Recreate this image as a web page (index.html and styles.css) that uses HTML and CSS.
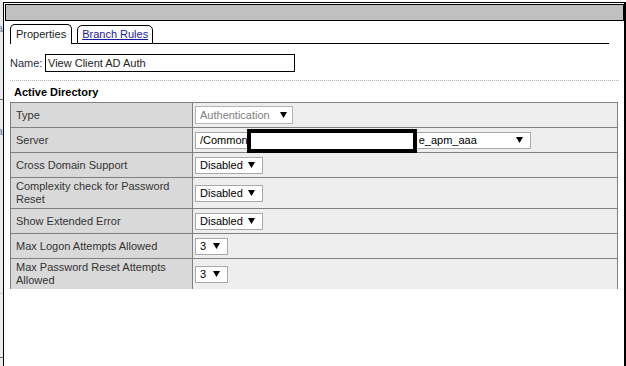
FILE: index.html
```html
<!DOCTYPE html>
<html>
<head>
<meta charset="utf-8">
<title>View Client AD Auth</title>
<link rel="stylesheet" href="styles.css">
</head>
<body>
<div class="page">
  <div class="strip">
    <div class="frag frag-top">fa</div>
    <div class="sline sline-a"></div>
    <div class="frag frag-mid">fa</div>
    <div class="sline sline-b"></div>
    <div class="sline sline-c"></div>
  </div>
  <div class="dialog">
    <div class="titlebar"></div>
    <div class="tabs">
      <div class="tab active">Properties</div>
      <div class="tabgap"></div>
      <div class="tab"><a href="#">Branch Rules</a></div>
      <div class="tabfill"></div>
    </div>
    <div class="namerow">
      <span class="namelabel">Name:</span>
      <div class="input">View Client AD Auth</div>
    </div>
    <div class="sep"></div>
    <div class="heading">Active Directory</div>
    <div class="gridwrap">
      <div class="grid">
        <div class="lbl">Type</div>
        <div class="val"><span class="sel sel-type"><span class="disabled">Authentication</span><svg class="arr" width="7" height="6" viewBox="0 0 7 6"><path d="M0 0H7L3.5 6Z"/></svg></span></div>

        <div class="lbl">Server</div>
        <div class="val"><span class="sel sel-server"><span>/Common<span class="hidden-part"></span>e_apm_aaa</span><svg class="arr" width="7" height="6" viewBox="0 0 7 6"><path d="M0 0H7L3.5 6Z"/></svg></span><div class="redact"></div></div>

        <div class="lbl">Cross Domain Support</div>
        <div class="val"><span class="sel sel-dis"><span>Disabled</span><svg class="arr" width="7" height="6" viewBox="0 0 7 6"><path d="M0 0H7L3.5 6Z"/></svg></span></div>

        <div class="lbl">Complexity check for Password Reset</div>
        <div class="val"><span class="sel sel-dis"><span>Disabled</span><svg class="arr" width="7" height="6" viewBox="0 0 7 6"><path d="M0 0H7L3.5 6Z"/></svg></span></div>

        <div class="lbl">Show Extended Error</div>
        <div class="val"><span class="sel sel-dis"><span>Disabled</span><svg class="arr" width="7" height="6" viewBox="0 0 7 6"><path d="M0 0H7L3.5 6Z"/></svg></span></div>

        <div class="lbl">Max Logon Attempts Allowed</div>
        <div class="val"><span class="sel sel-num"><span>3</span><svg class="arr" width="7" height="6" viewBox="0 0 7 6"><path d="M0 0H7L3.5 6Z"/></svg></span></div>

        <div class="lbl">Max Password Reset Attempts Allowed</div>
        <div class="val"><span class="sel sel-num"><span>3</span><svg class="arr" width="7" height="6" viewBox="0 0 7 6"><path d="M0 0H7L3.5 6Z"/></svg></span></div>
      </div>
    </div>
  </div>
</div>
</body>
</html>
```
FILE: styles.css
```css
* { box-sizing: border-box; }
html, body { margin: 0; padding: 0; }
body {
  font: 11px "Liberation Sans", Arial, sans-serif;
  color: #333;
  background: #fff;
}
.page {
  display: flex;
  height: 366px;
  overflow: hidden;
}

/* background page strip at left */
.strip {
  width: 3px;
  flex: none;
  background: #ebebeb;
  display: flex;
  flex-direction: column;
  overflow: hidden;
}
.frag {
  display: flex;
  justify-content: flex-end;
  white-space: nowrap;
  color: #6a7690;
  font-size: 11px;
  line-height: 10px;
  height: 10px;
}
.frag-top { margin-top: 23px; }
.sline { height: 1px; flex: none; background: #666; }
.sline-a { margin-top: 66px; }
.frag-mid { margin-top: 26px; }
.sline-b { margin-top: 157px; background: #c8c8c8; }
.sline-c { margin-top: 63px; }

/* dialog */
.dialog {
  flex: 1;
  margin-top: 2px;
  border: 1px solid #000;
  border-right-width: 2px;
  border-bottom: 0;
  padding: 1px 0 0 1px;
  background: #fff;
  display: flex;
  flex-direction: column;
}
.titlebar {
  height: 17px;
  border: 1px solid #000;
  background: #c0c0c0;
  flex: none;
}

/* tabs */
.tabs {
  display: flex;
  align-items: flex-end;
  margin: 3px 15px 0 5px;
  height: 20px;
  flex: none;
}
.tab {
  border: 1px solid #000;
  border-radius: 5px 5px 0 0;
  height: 19px;
  line-height: 17px;
  padding: 0 4px;
  color: #222;
}
.tab.active {
  border-bottom: 0;
  height: 20px;
  line-height: 19px;
  padding: 0 5px;
}
.tab a { color: #1a1a9c; text-decoration: underline; }
.tabgap {
  width: 5px;
  height: 1px;
  border-bottom: 1px solid #000;
}
.tabfill {
  flex: 1;
  height: 1px;
  border-bottom: 1px solid #000;
}

/* name row */
.namerow {
  display: flex;
  align-items: center;
  margin: 10px 0 0 5px;
  flex: none;
}
.namelabel { width: 35px; color: #2b2b3b; }
.input {
  width: 250px;
  height: 18px;
  border: 1px solid #000;
  padding-left: 2px;
  line-height: 16px;
  color: #222;
}

.sep {
  margin: 8px 5px 0 5px;
  border-top: 1px dotted #b4b4b4;
  flex: none;
}
.heading {
  margin: 5px 0 3px 0;
  padding-left: 9px;
  line-height: 13px;
  font-weight: bold;
  color: #000;
  flex: none;
}

/* properties grid */
.gridwrap {
  margin: 0 6px 0 5px;
  height: 187px;
  overflow: hidden;
  flex: none;
}
.grid {
  display: grid;
  grid-template-columns: 182px 1fr;
  border: 1px solid #808080;
  border-bottom: 0;
}
.lbl {
  background: #d9d9d9;
  border-right: 1px solid #808080;
  border-bottom: 1px solid #808080;
  padding: 2px 5px;
  min-height: 25px;
  display: flex;
  align-items: center;
  line-height: 13px;
  color: #333;
}
.val {
  background: #eeeeee;
  border-bottom: 1px solid #808080;
  padding: 0 2px;
  display: flex;
  align-items: center;
  position: relative;
}

/* select boxes */
.sel {
  display: inline-flex;
  align-items: center;
  justify-content: space-between;
  height: 17px;
  border: 1px solid #a9a9a9;
  background: #fff;
  padding: 0 7px 0 4px;
  color: #000;
  line-height: 15px;
  white-space: nowrap;
}
.arr { display: block; flex: none; }
.sel-type { width: 98px; height: 18px; padding-right: 5px; border-color: #b4b4b4; }
.sel-type .disabled { color: #808080; }
.sel-server { width: 336px; }
.sel-dis { width: 68px; }
.sel-num { width: 33px; }
.hidden-part { display: inline-block; width: 171px; }

.redact {
  position: absolute;
  left: 54px;
  top: 1px;
  width: 170px;
  height: 24px;
  border: 4px solid #000;
  background: #fff;
}
```
